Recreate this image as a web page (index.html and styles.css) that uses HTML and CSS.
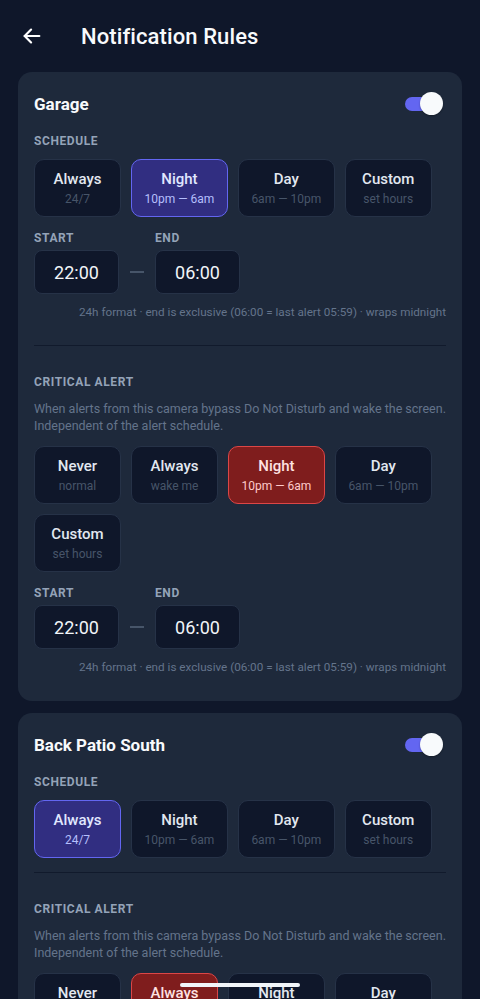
FILE: index.html
```html
<!DOCTYPE html>
<html lang="en">
<head>
    <meta charset="UTF-8">
    <meta name="viewport" content="width=device-width, initial-scale=1.0">
    <title>Notification Rules</title>
    <link rel="stylesheet" href="styles.css">
</head>
<body>
    <header class="topbar">
        <button class="back" aria-label="Back">
            <svg width="22" height="22" viewBox="0 0 24 24" fill="none" stroke="#fff" stroke-width="2.4" stroke-linecap="round" stroke-linejoin="round">
                <path d="M20 12H4"/>
                <path d="M11 5l-7 7 7 7"/>
            </svg>
        </button>
        <h1>Notification Rules</h1>
    </header>

    <main class="list">
        <section class="camera">
            <div class="camera-head">
                <h2>Garage</h2>
                <div class="toggle on"><span class="knob"></span></div>
            </div>

            <div class="label">Schedule</div>
            <div class="chips">
                <div class="chip"><strong>Always</strong><span>24/7</span></div>
                <div class="chip chip-on"><strong>Night</strong><span>10pm — 6am</span></div>
                <div class="chip"><strong>Day</strong><span>6am — 10pm</span></div>
                <div class="chip"><strong>Custom</strong><span>set hours</span></div>
            </div>
            <div class="range">
                <div class="field">
                    <div class="label">Start</div>
                    <div class="time">22:00</div>
                </div>
                <div class="dash"></div>
                <div class="field">
                    <div class="label">End</div>
                    <div class="time">06:00</div>
                </div>
            </div>
            <p class="note">24h format · end is exclusive (06:00 = last alert 05:59) · wraps midnight</p>

            <hr class="divider">

            <div class="critical">
                <div class="label">Critical Alert</div>
                <p class="desc">When alerts from this camera bypass Do Not Disturb and wake the screen. Independent of the alert schedule.</p>
                <div class="chips">
                    <div class="chip"><strong>Never</strong><span>normal</span></div>
                    <div class="chip"><strong>Always</strong><span>wake me</span></div>
                    <div class="chip chip-red"><strong>Night</strong><span>10pm — 6am</span></div>
                    <div class="chip"><strong>Day</strong><span>6am — 10pm</span></div>
                    <div class="chip"><strong>Custom</strong><span>set hours</span></div>
                </div>
                <div class="range">
                    <div class="field">
                        <div class="label">Start</div>
                        <div class="time">22:00</div>
                    </div>
                    <div class="dash"></div>
                    <div class="field">
                        <div class="label">End</div>
                        <div class="time">06:00</div>
                    </div>
                </div>
                <p class="note">24h format · end is exclusive (06:00 = last alert 05:59) · wraps midnight</p>
            </div>
        </section>

        <section class="camera">
            <div class="camera-head">
                <h2>Back Patio South</h2>
                <div class="toggle on"><span class="knob"></span></div>
            </div>

            <div class="label">Schedule</div>
            <div class="chips">
                <div class="chip chip-on"><strong>Always</strong><span>24/7</span></div>
                <div class="chip"><strong>Night</strong><span>10pm — 6am</span></div>
                <div class="chip"><strong>Day</strong><span>6am — 10pm</span></div>
                <div class="chip"><strong>Custom</strong><span>set hours</span></div>
            </div>

            <hr class="divider">

            <div class="critical">
                <div class="label">Critical Alert</div>
                <p class="desc">When alerts from this camera bypass Do Not Disturb and wake the screen. Independent of the alert schedule.</p>
                <div class="chips">
                    <div class="chip"><strong>Never</strong><span>normal</span></div>
                    <div class="chip chip-red"><strong>Always</strong><span>wake me</span></div>
                    <div class="chip"><strong>Night</strong><span>10pm — 6am</span></div>
                    <div class="chip"><strong>Day</strong><span>6am — 10pm</span></div>
                    <div class="chip"><strong>Custom</strong><span>set hours</span></div>
                </div>
            </div>
        </section>
    </main>

    <div class="home-bar"></div>
</body>
</html>
```

FILE: styles.css
```css
body {
    font-family: Roboto, "Noto Sans", sans-serif;
    margin: 0;
    padding: 0;
    background-color: #0f172a;
    color: #e2e8f0;
}
.topbar {
    display: flex;
    align-items: center;
    height: 72px;
    padding: 0 20px;
    box-sizing: border-box;
}
.back {
    background: none;
    border: none;
    padding: 0;
    width: 24px;
    height: 24px;
    display: flex;
    align-items: center;
    justify-content: center;
    margin-right: 37px;
}
.topbar h1 {
    margin: 0;
    font-size: 22px;
    font-weight: 500;
    color: #f8fafc;
    letter-spacing: 0.1px;
}
.list {
    padding: 0 18px 20px;
    display: flex;
    flex-direction: column;
    gap: 12px;
}
.camera {
    background: #1e293b;
    border-radius: 14px;
    padding: 20px 16px 26px;
}
.camera-head {
    display: flex;
    align-items: center;
    justify-content: space-between;
    height: 24px;
    margin-bottom: 17px;
}
.camera-head h2 {
    margin: 0;
    font-size: 17px;
    font-weight: 700;
    color: #f8fafc;
}
.toggle {
    position: relative;
    width: 38px;
    height: 24px;
    margin-right: 3px;
}
.toggle::before {
    content: "";
    position: absolute;
    left: 0;
    top: 5px;
    width: 34px;
    height: 14px;
    border-radius: 7px;
    background: #6366f1;
}
.toggle .knob {
    position: absolute;
    right: 0;
    top: 0;
    width: 23px;
    height: 23px;
    border-radius: 50%;
    background: #f8fafc;
    box-shadow: 0 1px 2px rgba(0, 0, 0, 0.3);
}
.label {
    font-size: 12px;
    line-height: 16px;
    font-weight: 700;
    letter-spacing: 0.6px;
    text-transform: uppercase;
    color: #94a3b8;
    margin-bottom: 10px;
}
.chips {
    display: flex;
    flex-wrap: wrap;
    gap: 10px;
}
.chip {
    box-sizing: border-box;
    min-width: 87px;
    height: 58px;
    padding: 0 12.5px;
    border: 1px solid #263247;
    border-radius: 10px;
    background: #0f172a;
    display: flex;
    flex-direction: column;
    align-items: center;
    justify-content: center;
    gap: 3px;
}
.chip strong {
    font-size: 15px;
    line-height: 18px;
    font-weight: 500;
    color: #e2e8f0;
}
.chip span {
    font-size: 12px;
    line-height: 16px;
    color: #475569;
}
.chip-on {
    background: #312e81;
    border-color: #6366f1;
}
.chip-on strong {
    color: #e0e7ff;
}
.chip-on span {
    color: #b4bffc;
}
.chip-red {
    background: #7f1d1d;
    border-color: #dc4646;
}
.chip-red strong {
    color: #fee2e2;
}
.chip-red span {
    color: #fecaca;
}
.range {
    display: flex;
    align-items: flex-end;
    margin-top: 13px;
}
.range .label {
    margin-bottom: 4px;
}
.time {
    box-sizing: border-box;
    width: 85px;
    height: 44px;
    border: 1px solid #263247;
    border-radius: 8px;
    background: #0f172a;
    display: flex;
    align-items: center;
    justify-content: center;
    font-size: 18px;
    color: #f1f5f9;
}
.dash {
    width: 14px;
    height: 2px;
    background: #475569;
    margin: 0 11px 21px;
}
.note {
    margin: 10px 0 0;
    font-size: 11.7px;
    line-height: 16px;
    color: #64748b;
    text-align: right;
}
.divider {
    border: none;
    height: 1px;
    background: #111a2c;
    margin: 14px 0 0;
}
.range + .note + .divider {
    margin-top: 25px;
}
.critical {
    padding-top: 28px;
}
.critical .label {
    margin-bottom: 10px;
}
.critical .range .label {
    margin-bottom: 4px;
}
.desc {
    margin: 0 0 12px;
    font-size: 12.5px;
    line-height: 17px;
    color: #64748b;
}
.home-bar {
    position: fixed;
    left: 180px;
    bottom: 12px;
    width: 120px;
    height: 4px;
    border-radius: 2px;
    background: #f1f5f9;
}
```
